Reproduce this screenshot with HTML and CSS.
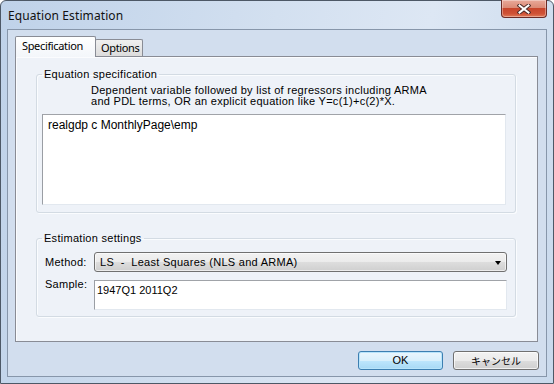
FILE: index.html
```html
<!DOCTYPE html>
<html>
<head>
<meta charset="utf-8">
<link rel="stylesheet" href="styles.css">
</head>
<body>
<div class="window">
  <div class="titlebar">
    <span class="title">Equation Estimation</span>
    <div class="close">
      <svg width="14" height="10" viewBox="0 0 14 10">
        <path d="M2.5 1.5 L11.5 8.5 M11.5 1.5 L2.5 8.5" stroke="#4a2a28" stroke-width="4" stroke-linecap="square"/>
        <path d="M2.5 1.5 L11.5 8.5 M11.5 1.5 L2.5 8.5" stroke="#ffffff" stroke-width="2" stroke-linecap="square"/>
      </svg>
    </div>
  </div>
  <div class="client">
    <div class="tabs">
      <div class="tab active">Specification</div>
      <div class="tab">Options</div>
    </div>
    <div class="panel">
      <fieldset class="group eq">
        <legend>Equation specification</legend>
        <p class="desc">Dependent variable followed by list of regressors including ARMA<br>and PDL terms, OR an explicit equation like Y=c(1)+c(2)*X.</p>
        <div class="textarea">realgdp c MonthlyPage\emp</div>
      </fieldset>
      <fieldset class="group est">
        <legend>Estimation settings</legend>
        <div class="row method">
          <label class="lbl">Method:</label>
          <div class="select"><span class="sel-text">LS  -  Least Squares (NLS and ARMA)</span><span class="arrow"></span></div>
        </div>
        <div class="row sample">
          <label class="lbl">Sample:</label>
          <div class="input">1947Q1 2011Q2</div>
        </div>
      </fieldset>
    </div>
    <div class="buttons">
      <button class="btn default">OK</button>
      <button class="btn cancel">キャンセル</button>
    </div>
  </div>
</div>
</body>
</html>
```
FILE: styles.css
```css
html, body {
  margin: 0;
  padding: 0;
  background: #ffffff;
}
body {
  width: 554px;
  height: 384px;
  overflow: hidden;
  font-family: "Liberation Sans", Arial, sans-serif;
  font-size: 11px;
  letter-spacing: 0.28px;
  color: #000;
}
.window {
  box-sizing: border-box;
  width: 554px;
  height: 384px;
  border: 1px solid #4d5866;
  border-radius: 6px 6px 0 0;
  background: linear-gradient(100deg, #bfd2e9 0%, #d3e0f0 45%, #dde7f4 70%, #c9d9ec 100%);
  padding: 0 6px 6px 6px;
  display: flex;
  flex-direction: column;
}
.titlebar {
  height: 28px;
  display: flex;
  align-items: flex-start;
  justify-content: space-between;
}
.title {
  font-family: "Noto Sans", "Open Sans", sans-serif;
  font-size: 12px;
  letter-spacing: 0.1px;
  line-height: 16px;
  margin: 7px 0 0 1px;
  color: #111;
}
.close {
  width: 46px;
  height: 18px;
  margin-top: -1px;
  box-sizing: border-box;
  border: 1px solid #6b2b26;
  border-top: none;
  border-radius: 0 0 4px 4px;
  background: linear-gradient(#e9a99a 0%, #db8a76 45%, #c8452c 50%, #cf5236 80%, #e07a58 100%);
  box-shadow: inset 0 0 0 1px rgba(255,255,255,0.35);
  display: flex;
  align-items: center;
  justify-content: center;
}
.close svg { display: block; margin-top: 1px; }
.client {
  flex: 1;
  border: 1px solid #8796aa;
  background: #d2deee;
  padding: 6px 8px 6px 7px;
  display: flex;
  flex-direction: column;
}
.tabs {
  height: 20px;
  display: flex;
  align-items: flex-end;
}
.tab {
  box-sizing: border-box;
  font-family: "Noto Sans", "Open Sans", sans-serif;
  font-size: 11px;
  letter-spacing: -0.35px;
  border: 1px solid #898c95;
  border-bottom: none;
  border-radius: 2px 2px 0 0;
  padding: 0 5px;
}
.tab.active {
  position: relative;
  z-index: 1;
  height: 21px;
  margin-bottom: -1px;
  width: 81px;
  padding-left: 6px;
  line-height: 18px;
  background: linear-gradient(#ffffff, #f3f6fa);
}
.tab:not(.active) {
  height: 17px;
  width: 48px;
  margin-left: -1px;
  line-height: 15px;
  background: linear-gradient(#f0f0f0, #dcdcdc);
}
.panel {
  box-sizing: border-box;
  height: 286px;
  border: 1px solid #898c95;
  background: #eef2f8;
  box-shadow: inset 1px 1px 0 #fbfcfe;
  padding: 9px 21px 0 20px;
}
.group {
  margin: 0;
  min-width: 0;
  border: 1px solid #d3dbe3;
  border-radius: 3px;
  box-shadow: 1px 1px 0 #fafcfe, inset 1px 1px 0 #fafcfe;
}
.group legend {
  padding: 0 2px;
  line-height: 16px;
  font-size: 11px;
}
.eq {
  padding: 0 9px 7px 5px;
}
.est {
  margin-top: 17px;
  padding: 0 8px 6px 5px;
}
.desc {
  margin: 3px 0 0 49px;
  line-height: 11px;
  font-size: 11px;
}
.textarea {
  box-sizing: border-box;
  margin-top: 7px;
  height: 91px;
  background: #fff;
  border: 1px solid;
  border-color: #a0a3a8 #e2e8ef #e2e8ef #9a9ea4;
  padding: 3px 5px;
  font-size: 12px;
  letter-spacing: 0;
  line-height: 14px;
}
.row {
  display: flex;
  margin-left: 3px;
}
.row.method {
  margin-top: 6px;
  align-items: center;
}
.row.sample {
  margin-top: 8px;
  align-items: flex-start;
}
.lbl {
  width: 49px;
  flex: none;
}
.method .lbl { line-height: 20px; }
.sample .lbl { line-height: 14px; margin-top: -3px; }
.select {
  flex: 1;
  box-sizing: border-box;
  height: 20px;
  border: 1px solid #707070;
  border-radius: 3px;
  background: linear-gradient(#f2f2f2 0%, #ebebeb 50%, #dddddd 51%, #cfcfcf 100%);
  box-shadow: inset 0 0 0 1px rgba(255,255,255,0.6);
  display: flex;
  align-items: center;
  justify-content: space-between;
  padding: 0 5px 0 5px;
}
.sel-text {
  white-space: pre;
  line-height: 18px;
}
.arrow {
  width: 0;
  height: 0;
  border-left: 3.5px solid transparent;
  border-right: 3.5px solid transparent;
  border-top: 4px solid #000;
  margin-top: 1px;
}
.input {
  flex: 1;
  box-sizing: border-box;
  height: 30px;
  background: #fff;
  border: 1px solid;
  border-color: #a0a3a8 #e2e8ef #e2e8ef #9a9ea4;
  padding: 2px 2px;
  letter-spacing: 0;
  line-height: 14px;
}
.buttons {
  margin-top: 9px;
  margin-right: -1px;
  display: flex;
  justify-content: flex-end;
  gap: 10px;
}
.btn {
  box-sizing: border-box;
  height: 19px;
  border-radius: 3px;
  padding: 0;
  font-family: "Liberation Sans", "Noto Sans CJK JP", sans-serif;
  font-size: 11px;
  line-height: 15px;
  color: #000;
}
.btn.default {
  width: 85px;
  border: 1px solid #3c7fb1;
  background: linear-gradient(#eaf6fd 0%, #d9f0fc 50%, #bee6fd 51%, #a7d9f5 100%);
  box-shadow: inset 0 0 0 1px #b8e4fb;
}
.btn.cancel {
  width: 86px;
  border: 1px solid #707070;
  background: linear-gradient(#f2f2f2 0%, #ebebeb 50%, #dddddd 51%, #cfcfcf 100%);
  box-shadow: inset 0 0 0 1px rgba(255,255,255,0.7);
  font-family: "Noto Sans CJK JP", sans-serif;
  font-size: 10px;
}
```
